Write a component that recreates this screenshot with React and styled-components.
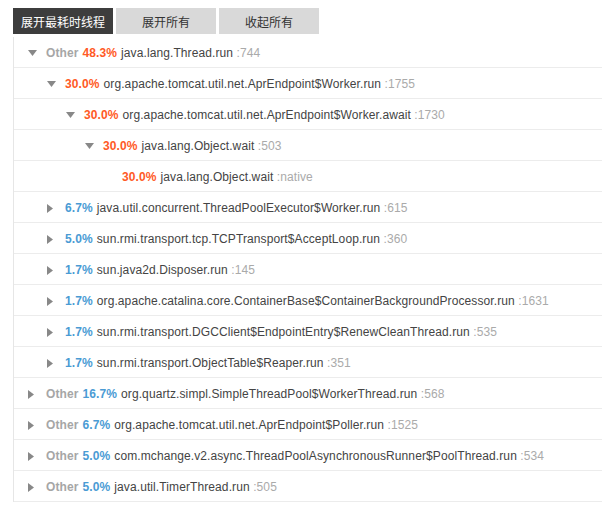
import styled, { createGlobalStyle } from "styled-components";
import { useState } from "react";

const GlobalStyle = createGlobalStyle`
  body {
    margin: 0;
    background: #fff;
    font-family: "Liberation Sans", Arial, "Noto Sans CJK SC", sans-serif;
    font-size: 12px;
    overflow: hidden;
  }
`;

const Page = styled.div`
  padding: 8px 0 0 13px;
`;

const Toolbar = styled.div`
  display: flex;
  gap: 3px;
`;

const TabButton = styled.button`
  width: 100px;
  height: 26px;
  border: none;
  padding: 0;
  font-family: "Liberation Sans", "Noto Sans CJK SC", sans-serif;
  font-size: 12px;
  background: ${(p) => (p.active ? "#3d3d3d" : "#d9d9d9")};
  color: ${(p) => (p.active ? "#fff" : "#333")};
  cursor: pointer;
`;

const Tree = styled.ul`
  list-style: none;
  margin: 3px 0 0;
  padding: 0;
  border-left: 1px solid #e6e6e6;
`;

const Row = styled.li`
  box-sizing: border-box;
  display: flex;
  align-items: center;
  height: 31px;
  padding-top: 2px;
  border-bottom: 1px solid #ececec;
  padding-left: ${(p) => 14 + p.depth * 19}px;
  white-space: nowrap;
  color: #444;
  letter-spacing: 0.1px;
`;

const Toggle = styled.span`
  width: 18px;
  display: flex;
  align-items: center;
  flex-shrink: 0;
  cursor: pointer;
`;

const Other = styled.span`
  color: #a6a6a6;
  font-weight: bold;
  margin-right: 4px;
`;

const Percent = styled.span`
  color: ${(p) => (p.hot ? "#ff5a26" : "#4a9bd4")};
  font-weight: bold;
  margin-right: 4px;
`;

const Line = styled.span`
  color: #aaa;
`;

const Arrow = ({ open }) =>
  open ? (
    <svg width="9" height="6" viewBox="0 0 9 6">
      <polygon points="0,0 9,0 4.5,6" fill="#888" />
    </svg>
  ) : (
    <svg width="6" height="9" viewBox="0 0 6 9">
      <polygon points="0,0 6,4.5 0,9" fill="#888" />
    </svg>
  );

const rows = [
  { d: 0, other: true, pct: "48.3%", hot: true, name: "java.lang.Thread.run", line: "744", open: true },
  { d: 1, pct: "30.0%", hot: true, name: "org.apache.tomcat.util.net.AprEndpoint$Worker.run", line: "1755", open: true },
  { d: 2, pct: "30.0%", hot: true, name: "org.apache.tomcat.util.net.AprEndpoint$Worker.await", line: "1730", open: true },
  { d: 3, pct: "30.0%", hot: true, name: "java.lang.Object.wait", line: "503", open: true },
  { d: 4, pct: "30.0%", hot: true, name: "java.lang.Object.wait", line: "native", leaf: true },
  { d: 1, pct: "6.7%", name: "java.util.concurrent.ThreadPoolExecutor$Worker.run", line: "615" },
  { d: 1, pct: "5.0%", name: "sun.rmi.transport.tcp.TCPTransport$AcceptLoop.run", line: "360" },
  { d: 1, pct: "1.7%", name: "sun.java2d.Disposer.run", line: "145" },
  { d: 1, pct: "1.7%", name: "org.apache.catalina.core.ContainerBase$ContainerBackgroundProcessor.run", line: "1631" },
  { d: 1, pct: "1.7%", name: "sun.rmi.transport.DGCClient$EndpointEntry$RenewCleanThread.run", line: "535" },
  { d: 1, pct: "1.7%", name: "sun.rmi.transport.ObjectTable$Reaper.run", line: "351" },
  { d: 0, other: true, pct: "16.7%", name: "org.quartz.simpl.SimpleThreadPool$WorkerThread.run", line: "568" },
  { d: 0, other: true, pct: "6.7%", name: "org.apache.tomcat.util.net.AprEndpoint$Poller.run", line: "1525" },
  { d: 0, other: true, pct: "5.0%", name: "com.mchange.v2.async.ThreadPoolAsynchronousRunner$PoolThread.run", line: "534" },
  { d: 0, other: true, pct: "5.0%", name: "java.util.TimerThread.run", line: "505" },
];

const App = () => {
  const [tab, setTab] = useState(0);
  const tabs = ["展开最耗时线程", "展开所有", "收起所有"];

  return (
    <Page>
      <GlobalStyle />
      <Toolbar>
        {tabs.map((t, i) => (
          <TabButton key={t} active={tab === i} onClick={() => setTab(i)}>
            {t}
          </TabButton>
        ))}
      </Toolbar>
      <Tree>
        {rows.map((r, i) => (
          <Row key={i} depth={r.d}>
            <Toggle>{!r.leaf && <Arrow open={r.open} />}</Toggle>
            {r.other && <Other>Other</Other>}
            <Percent hot={r.hot}>{r.pct}</Percent>
            {r.name}&nbsp;<Line>:{r.line}</Line>
          </Row>
        ))}
      </Tree>
    </Page>
  );
};

export default App;
